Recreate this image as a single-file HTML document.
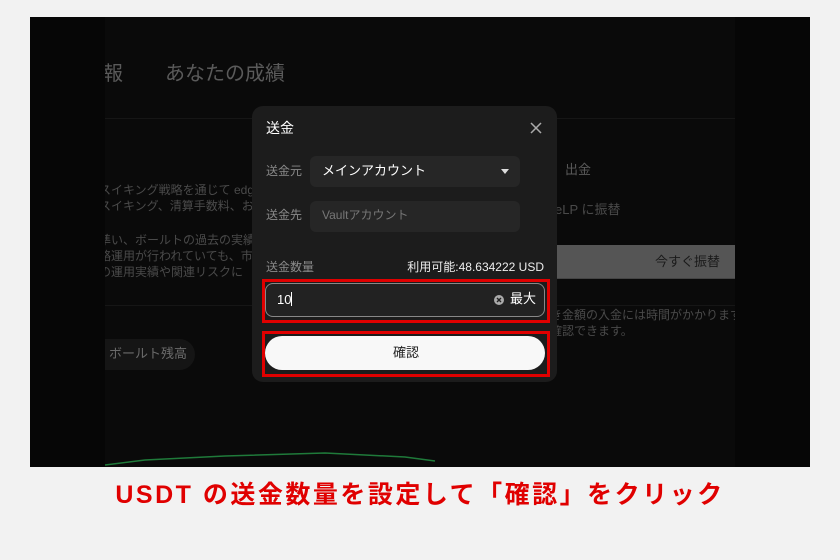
<!DOCTYPE html>
<html><head><meta charset="utf-8"><style>
*{margin:0;padding:0;box-sizing:border-box}
body{width:840px;height:560px;background:#f2f2f2;position:relative;overflow:hidden;font-family:"Liberation Sans","Noto Sans CJK JP",sans-serif}
.a{position:absolute;white-space:nowrap;line-height:1.2}
.bg{position:absolute;left:30px;top:17px;width:780px;height:450px;background:#060606}
.inner{position:absolute;left:105px;top:17px;width:630px;height:450px;background:#0a0a0a;overflow:hidden}
.g{color:#4a4a4a;font-size:12px}
.modal{position:absolute;left:252px;top:106px;width:305px;height:276px;background:#1c1c1c;border-radius:11px}
.lab{color:#8a8a8a;font-size:12px}
.box{position:absolute;background:#262626;border-radius:6px}
.red{position:absolute;border:3px solid #e00000}
</style></head><body>
<div class="bg"></div>
<div class="inner">
 <div class="a" style="left:-2px;top:45px;font-size:20px;color:#5a5a5a">報</div>
 <div class="a" style="left:60px;top:45px;font-size:20px;color:#5a5a5a">あなたの成績</div>
 <div class="a" style="left:0;top:101px;width:630px;height:1px;background:#161616"></div>
 <div class="a g" style="left:-6px;top:166px">スイキング戦略を通じて edg</div>
 <div class="a g" style="left:-6px;top:182px">スイキング、清算手数料、お</div>
 <div class="a g" style="left:-6px;top:216px">準い、ボールトの過去の実績</div>
 <div class="a g" style="left:-6px;top:232px">略運用が行われていても、市</div>
 <div class="a g" style="left:-6px;top:248px">の運用実績や関連リスクに</div>
 <div class="a" style="left:0;top:288px;width:630px;height:1px;background:#161616"></div>
 <div class="a" style="left:-20px;top:322px;width:110px;height:31px;background:#151515;border-radius:16px"></div>
 <div class="a" style="left:4px;top:329px;font-size:13px;color:#6a6a6a">ボールト残高</div>
 <svg class="a" style="left:0;top:430px" width="630" height="20"><polyline points="0,18 40,13 120,9 220,6 300,10 330,14" fill="none" stroke="#1f7a3a" stroke-width="1.5"/></svg>
 <div class="a" style="left:460px;top:145px;font-size:13px;color:#5a5a5a">出金</div>
 <div class="a g" style="left:450px;top:185px;font-size:13px">eLP に振替</div>
 <div class="a" style="left:440px;top:228px;width:190px;height:34px;background:#555;border-bottom:1px solid #444"></div>
 <div class="a" style="left:550px;top:237px;font-size:13px;color:#1a1a1a">今すぐ振替</div>
 <div class="a g" style="left:445px;top:291px">き金額の入金には時間がかかります</div>
 <div class="a g" style="left:445px;top:307px">確認できます。</div>
</div>
<div class="modal">
 <div class="a" style="left:14px;top:14px;font-size:14px;color:#fff">送金</div>
 <svg class="a" style="left:278px;top:16px" width="12" height="12"><path d="M1 1L11 11M11 1L1 11" stroke="#aaa" stroke-width="1.5"/></svg>
 <div class="a lab" style="left:14px;top:58px">送金元</div>
 <div class="box" style="left:58px;top:50px;width:210px;height:31px"></div>
 <div class="a" style="left:70px;top:57px;font-size:13px;color:#fff">メインアカウント</div>
 <svg class="a" style="left:249px;top:63px" width="8" height="5"><path d="M0 0H8L4 5Z" fill="#ddd"/></svg>
 <div class="a lab" style="left:14px;top:102px">送金先</div>
 <div class="box" style="left:58px;top:95px;width:210px;height:31px"></div>
 <div class="a" style="left:70px;top:102px;font-size:12px;color:#777">Vaultアカウント</div>
 <div class="a lab" style="left:14px;top:154px">送金数量</div>
 <div class="a" style="right:13px;top:154px;font-size:12px;color:#eee">利用可能:48.634222 USD</div>
</div>
<div class="red" style="left:262px;top:279px;width:288px;height:44px"></div>
<div class="a" style="left:265px;top:283px;width:280px;height:34px;border:1px solid #888;border-radius:8px;background:#222"></div>
<div class="a" style="left:277px;top:292px;font-size:13px;color:#fff">10<span style="display:inline-block;width:1px;height:14px;background:#fff;vertical-align:-2px"></span></div>
<svg class="a" style="left:494px;top:295px" width="10" height="10"><circle cx="5" cy="5" r="5" fill="#aaa"/><path d="M3 3L7 7M7 3L3 7" stroke="#222" stroke-width="1.4"/></svg>
<div class="a" style="left:510px;top:291px;font-size:13px;color:#fff">最大</div>
<div class="red" style="left:262px;top:331px;width:288px;height:46px"></div>
<div class="a" style="left:265px;top:336px;width:280px;height:34px;background:#f8f8f8;border-radius:17px"></div>
<div class="a" style="left:393px;top:345px;font-size:13px;color:#222">確認</div>
<div class="a" style="left:0;width:840px;text-align:center;top:480px;font-size:25px;letter-spacing:2.5px;font-weight:bold;color:#e00000">USDT の送金数量を設定して「確認」をクリック</div>
</body></html>
